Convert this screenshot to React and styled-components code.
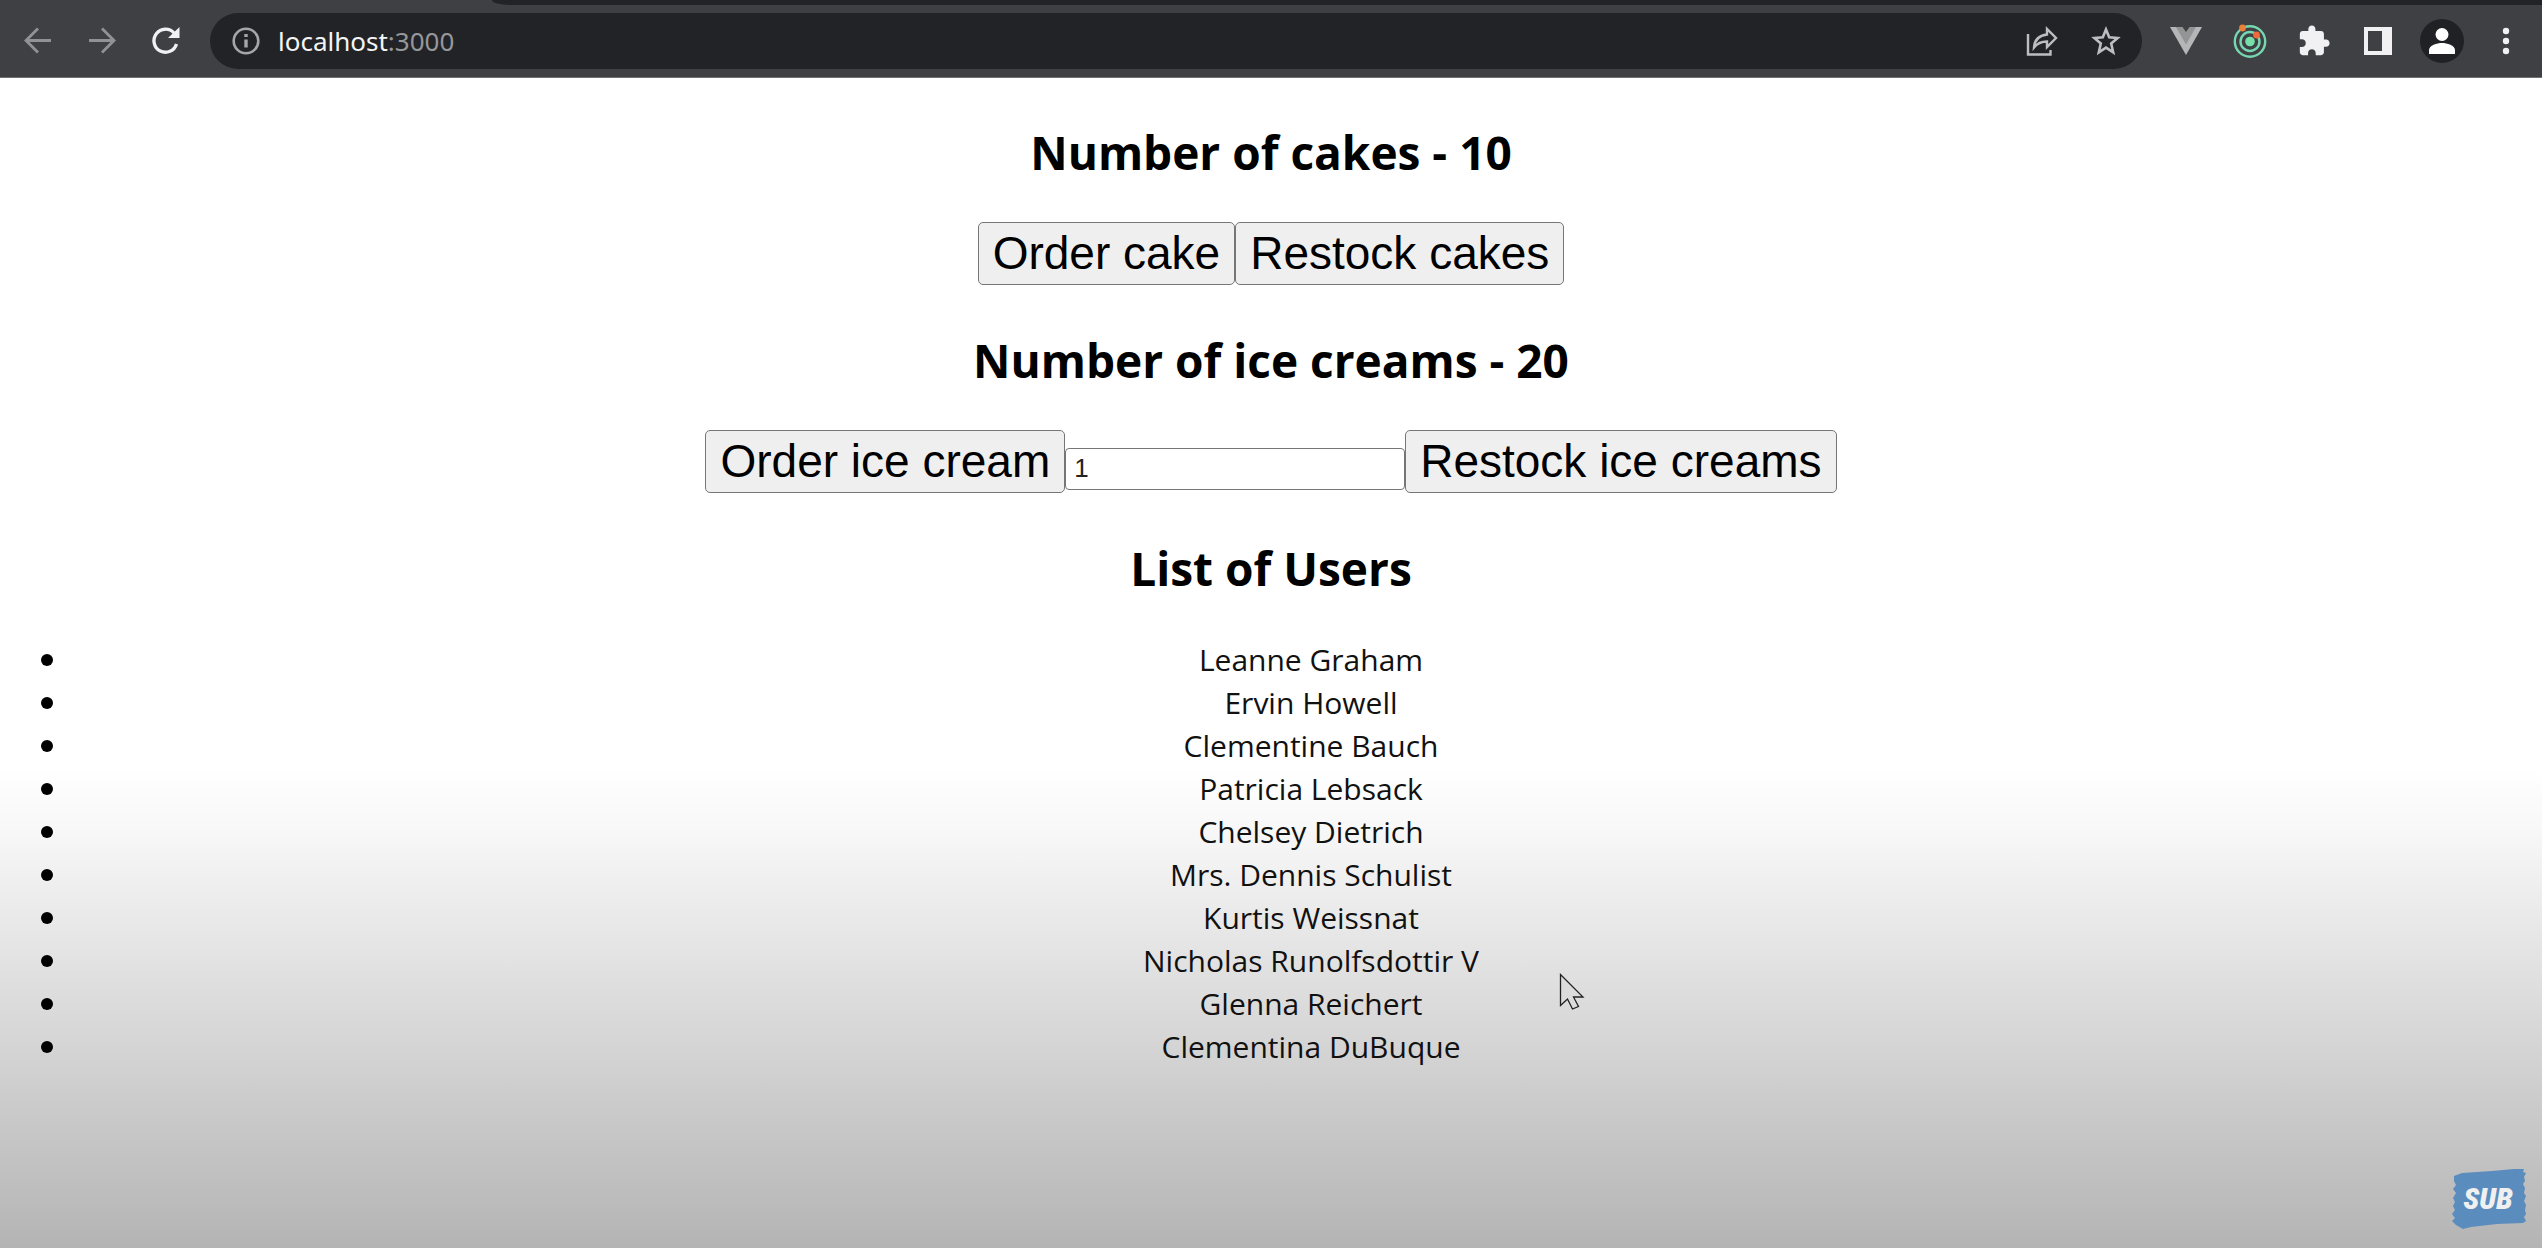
import React, { useState } from "react";
import styled, { createGlobalStyle } from "styled-components";

const uiFont = '"Open Sans", "Noto Sans", sans-serif';
const controlFont = '"Liberation Sans", Arial, sans-serif';

const GlobalStyle = createGlobalStyle`
  *, *::before, *::after { box-sizing: border-box; }
  body { margin: 0; font-family: ${uiFont}; color: #000; background: #fff; }
`;

const Screen = styled.div`
  min-height: 100vh;
  display: flex;
  flex-direction: column;
`;

const TabStrip = styled.div`
  height: 5px;
  padding-left: 492px;
  background: #3f4044;
`;

const StripRest = styled.div`
  height: 5px;
  background: #222327;
  border-bottom-left-radius: 18px 5px;
`;

const Toolbar = styled.header`
  height: 73px;
  display: flex;
  align-items: center;
  padding: 0 4px 0 6px;
  background: #3f4044;
  border-bottom: 1px solid #707174;
`;

const IconButton = styled.button`
  width: 64px;
  height: 56px;
  flex: none;
  display: grid;
  place-items: center;
  padding: 0;
  border: 0;
  background: none;
  color: ${(p) => p.$color || "#f1f1f4"};
`;

const AddressBar = styled.div`
  flex: 1;
  height: 56px;
  margin: 0 12px;
  padding: 0 4px;
  display: flex;
  align-items: center;
  border-radius: 28px;
  background: #222327;
`;

const Address = styled.div`
  flex: 1;
  font-family: "Noto Sans", sans-serif;
  font-size: 26px;
  line-height: 36px;
  color: #96979a;
`;

const Host = styled.span`
  color: #f4f4f4;
`;

const Avatar = styled.span`
  width: 44px;
  height: 44px;
  display: grid;
  place-items: center;
  border-radius: 50%;
  background: #202124;
`;

const Page = styled.main`
  flex: 1;
  display: flex;
  flex-direction: column;
  padding: 40px 0;
  gap: 41px;
  background: linear-gradient(#fff 0, #fff 59%, #f8f8f8 64%, #b4b4b4 100%);
`;

const Section = styled.section`
  display: flex;
  flex-direction: column;
  gap: 36px;
`;

const Title = styled.h2`
  margin: 0;
  font-size: 46px;
  line-height: 68px;
  font-weight: 700;
  text-align: center;
`;

const Controls = styled.div`
  display: flex;
  justify-content: center;
  align-items: baseline;
`;

const ActionButton = styled.button`
  padding: 4px 14px;
  font-family: ${controlFont};
  font-size: 46px;
  line-height: 53px;
  color: #000;
  background: #efefef;
  border: 1px solid #767676;
  border-radius: 5px;
`;

const AmountInput = styled.input`
  width: 340px;
  height: 42px;
  padding: 0 8px;
  font-family: ${controlFont};
  font-size: 26px;
  color: #222;
  background: #fff;
  border: 1px solid #767676;
  border-radius: 4px;
`;

const UserList = styled.ul`
  margin: 0;
  padding: 0 0 0 41px;
  list-style: none;
  font-size: 30px;
  line-height: 43px;
  color: #111;
`;

const UserItem = styled.li`
  display: flex;
  align-items: center;
  gap: 27px;

  &::before {
    content: "";
    width: 12px;
    height: 12px;
    border-radius: 50%;
    background: #000;
  }
`;

const UserName = styled.span`
  flex: 1;
  text-align: center;
`;

const Pointer = styled.svg`
  position: absolute;
  left: 1559px;
  top: 973px;
`;

const Subscribe = styled.a`
  position: absolute;
  right: 14px;
  bottom: 18px;
  width: 80px;
  height: 62px;
  display: grid;
  place-items: center;
  text-decoration: none;
`;

const Brush = styled.svg`
  grid-area: 1 / 1;
`;

const SubText = styled.span`
  grid-area: 1 / 1;
  z-index: 1;
  font-family: "Liberation Sans Narrow", "Roboto Condensed", Roboto, sans-serif;
  font-size: 30px;
  line-height: 32px;
  font-weight: 900;
  font-style: italic;
  color: #f0f0f0;
`;

const users = [
  "Leanne Graham",
  "Ervin Howell",
  "Clementine Bauch",
  "Patricia Lebsack",
  "Chelsey Dietrich",
  "Mrs. Dennis Schulist",
  "Kurtis Weissnat",
  "Nicholas Runolfsdottir V",
  "Glenna Reichert",
  "Clementina DuBuque",
];

const Arrow = ({ flip }) => (
  <svg width="28" height="28" viewBox="0 0 28 28" fill="none" stroke="currentColor" strokeWidth="2.800">
    <path d={flip ? "M1 13.500H25M14 1.500l12 12-12 12" : "M27 13.500H3M14 1.500L2 13.500l12 12"} />
  </svg>
);

const Reload = () => (
  <svg width="30" height="30" viewBox="0 0 30 30">
    <path d="M25.500 18a11.500 11.500 0 1 1-2.500-11" fill="none" stroke="currentColor" strokeWidth="3.300" />
    <path d="M28.500 1v11H17z" fill="currentColor" />
  </svg>
);

const Info = () => (
  <svg width="28" height="28" viewBox="0 0 28 28" fill="none" stroke="currentColor" strokeWidth="2.600">
    <circle cx="14" cy="14" r="12.300" />
    <path d="M14 12.500v8M14 7v3" strokeWidth="3.400" />
  </svg>
);

const Share = () => (
  <svg width="32" height="30" viewBox="0 0 32 30" fill="none" stroke="currentColor" strokeWidth="2.400">
    <path d="M2 8v20.500h22.500v-4.500" />
    <path d="M8 21.500c.5-8 5-12 13-13V3l9 9-9 9v-5.500c-5.500 0-9.500 1.500-13 6z" />
  </svg>
);

const Star = () => (
  <svg width="30" height="30" viewBox="0 0 30 30" fill="none" stroke="currentColor" strokeWidth="2.600">
    <path d="M15 3.500l3.200 7.800 8.400.7-6.400 5.500 2 8.800-7.200-4.700-7.200 4.700 2-8.800L3.400 12l8.400-.7z" />
  </svg>
);

const Vue = () => (
  <svg width="32" height="28" viewBox="0 0 32 28">
    <path d="M0 0h32L16 28z" fill="#b5b6b8" />
    <path d="M6 0h20L16 17.500z" fill="#939496" />
    <path d="M12.500 0h7l-3.500 5z" fill="#3f4044" />
  </svg>
);

const Rings = () => (
  <svg width="34" height="34" viewBox="0 0 34 34" fill="none" stroke="#76d8b0" strokeWidth="2.400">
    <circle cx="17" cy="17.500" r="15.200" />
    <circle cx="17" cy="17.500" r="9.500" />
    <circle cx="17" cy="17.500" r="4.800" fill="#76e0a8" stroke="none" />
    <circle cx="9.500" cy="4" r="3.400" fill="#e98138" stroke="none" />
    <circle cx="23.500" cy="11" r="3.400" fill="#f0683c" stroke="none" />
  </svg>
);

const Puzzle = () => (
  <svg width="34" height="34" viewBox="0 0 24 24" fill="currentColor">
    <path d="M20.500 11H19V7c0-1.100-.9-2-2-2h-4V3.500C13 2.120 11.880 1 10.500 1S8 2.120 8 3.500V5H4c-1.100 0-1.990.9-1.990 2v3.800H3.500c1.490 0 2.700 1.210 2.700 2.700s-1.210 2.700-2.700 2.700H2V20c0 1.100.9 2 2 2h3.800v-1.500c0-1.490 1.210-2.700 2.700-2.700 1.490 0 2.700 1.210 2.700 2.700V22H17c1.100 0 2-.9 2-2v-4h1.500c1.380 0 2.500-1.120 2.500-2.500S21.880 11 20.500 11z" />
  </svg>
);

const SidePanel = () => (
  <svg width="28" height="28" viewBox="0 0 28 28">
    <path fillRule="evenodd" d="M0 0h28v28H0zM4 4v20h14V4z" fill="currentColor" />
  </svg>
);

const Person = () => (
  <svg width="26" height="26" viewBox="0 0 26 26" fill="#fff">
    <circle cx="13" cy="6.500" r="6.500" />
    <path d="M0 26v-4c0-4.500 8-7 13-7s13 2.500 13 7v4z" />
  </svg>
);

const Dots = () => (
  <svg width="8" height="28" viewBox="0 0 8 28" fill="currentColor">
    <circle cx="4" cy="4" r="3.200" />
    <circle cx="4" cy="14" r="3.200" />
    <circle cx="4" cy="24" r="3.200" />
  </svg>
);

export default function App() {
  const [cakes, setCakes] = useState(10);
  const [iceCreams, setIceCreams] = useState(20);
  const [amount, setAmount] = useState("1");

  return (
    <>
      <GlobalStyle />
      <Screen>
        <TabStrip><StripRest /></TabStrip>
        <Toolbar>
          <IconButton aria-label="Back" $color="#919295"><Arrow /></IconButton>
          <IconButton aria-label="Forward" $color="#919295"><Arrow flip /></IconButton>
          <IconButton aria-label="Reload"><Reload /></IconButton>
          <AddressBar>
            <IconButton aria-label="Site information" $color="#a5a6a9"><Info /></IconButton>
            <Address><Host>localhost</Host>:3000</Address>
            <IconButton aria-label="Share" $color="#bdbec1"><Share /></IconButton>
            <IconButton aria-label="Bookmark" $color="#bdbec1"><Star /></IconButton>
          </AddressBar>
          <IconButton aria-label="Vue devtools"><Vue /></IconButton>
          <IconButton aria-label="React devtools"><Rings /></IconButton>
          <IconButton aria-label="Extensions"><Puzzle /></IconButton>
          <IconButton aria-label="Side panel"><SidePanel /></IconButton>
          <IconButton aria-label="Profile"><Avatar><Person /></Avatar></IconButton>
          <IconButton aria-label="Menu"><Dots /></IconButton>
        </Toolbar>
        <Page>
          <Section>
            <Title>Number of cakes - {cakes}</Title>
            <Controls>
              <ActionButton onClick={() => setCakes(cakes - 1)}>Order cake</ActionButton>
              <ActionButton onClick={() => setCakes(cakes + 5)}>Restock cakes</ActionButton>
            </Controls>
          </Section>
          <Section>
            <Title>Number of ice creams - {iceCreams}</Title>
            <Controls>
              <ActionButton onClick={() => setIceCreams(iceCreams - 1)}>Order ice cream</ActionButton>
              <AmountInput
                aria-label="Ice creams to restock"
                value={amount}
                onChange={(e) => setAmount(e.target.value)}
              />
              <ActionButton onClick={() => setIceCreams(iceCreams + Number(amount))}>Restock ice creams</ActionButton>
            </Controls>
          </Section>
          <Section>
            <Title>List of Users</Title>
            <UserList>
              {users.map((name) => (
                <UserItem key={name}><UserName>{name}</UserName></UserItem>
              ))}
            </UserList>
          </Section>
        </Page>
      </Screen>
      <Pointer width="26" height="38" viewBox="0 0 26 38" fill="#dcdcdc" stroke="#222" strokeWidth="1.300">
        <path d="M1.500 1.500v31l7-6.500 5 10 6-2.500-5-9.500h9.500z" />
      </Pointer>
      <Subscribe href="#subscribe">
        <Brush width="80" height="62" viewBox="0 0 78 62">
          <path fill="#5b8cbe" d="M5 8l8-3 30-2 22-2 10 0-1 3 3 1-2 4 1 4-2 3 2 4-1 5 2 3-2 5 2 4-1 5 1 4-2 3 2 4-3 2-26 1-26 3-8 2-7-4-4-4 3-3-3-4 3-4-2-4 2-4-2-4 3-5-3-4 3-4-2-4z" />
        </Brush>
        <SubText>SUB</SubText>
      </Subscribe>
    </>
  );
}
